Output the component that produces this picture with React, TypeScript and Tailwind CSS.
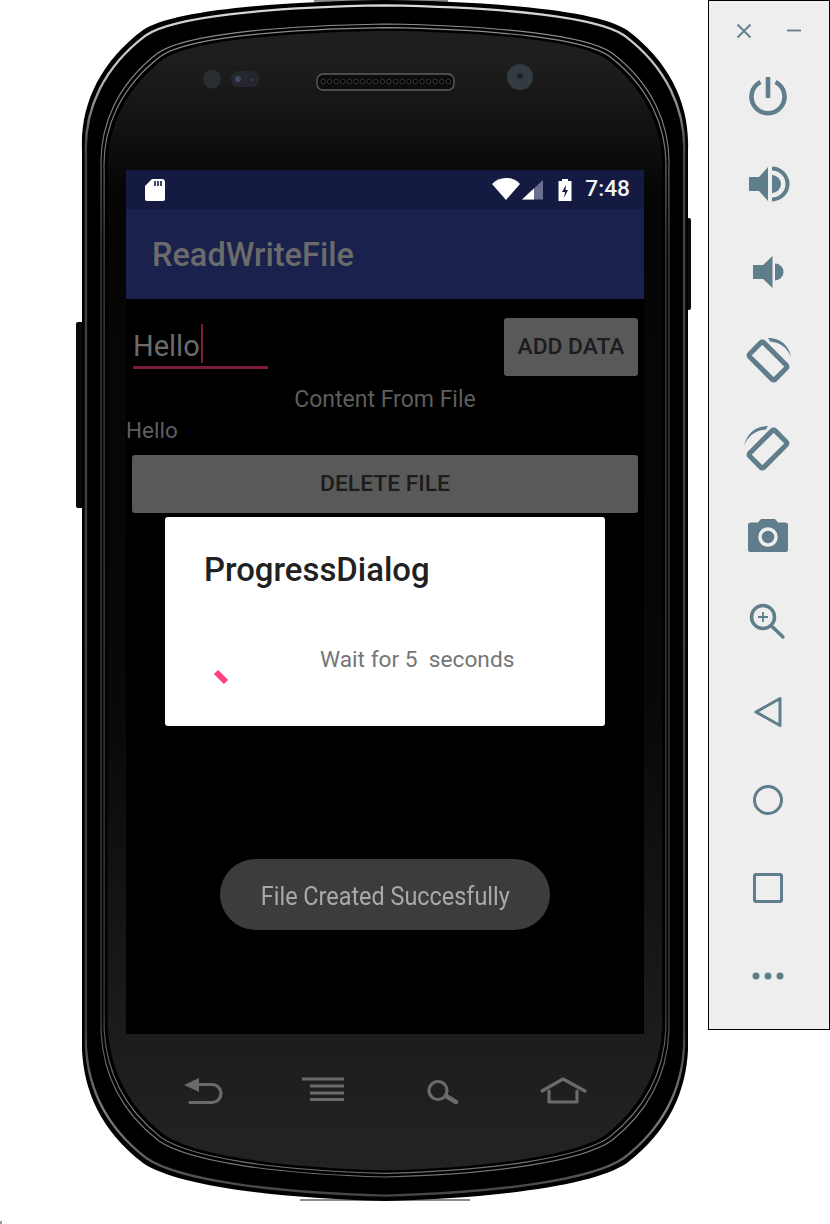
const BODY =
  "M82 150 C80 105 100 62 143 30 C170 12 260 2 385 0 C510 2 600 12 627 30 C670 62 690 105 688 150 L688 1050 C686 1090 670 1130 627 1163 C595 1185 500 1198 385 1201 C270 1198 175 1185 143 1163 C100 1130 84 1090 82 1050 Z";

function Layer(props: { sx: number; sy: number; fill?: string; stroke?: string; w?: number; soft?: boolean }) {
  return (
    <path
      d={BODY}
      transform={`translate(385 600.5) scale(${props.sx} ${props.sy}) translate(-385 -600.5)`}
      fill={props.fill ?? "none"}
      stroke={props.stroke ?? "none"}
      strokeWidth={props.w ?? 0}
      vectorEffect="non-scaling-stroke"
      filter={props.soft ? "url(#soft)" : undefined}
    />
  );
}

function PhoneFrame() {
  const dots = Array.from({ length: 20 }, (_, i) => 323 + i * 6.6);
  return (
    <svg className="absolute left-0 top-0" width={708} height={1224} viewBox="0 0 708 1224">
      <defs>
        <linearGradient id="bezel" gradientUnits="userSpaceOnUse" x1="0" y1="28" x2="0" y2="1170">
          <stop offset="0" stopColor="#1e1e1e" />
          <stop offset="0.05" stopColor="#151515" />
          <stop offset="0.125" stopColor="#050505" />
          <stop offset="0.6" stopColor="#080808" />
          <stop offset="0.875" stopColor="#1a1a1a" />
          <stop offset="1" stopColor="#222222" />
        </linearGradient>
        <linearGradient id="rim" gradientUnits="userSpaceOnUse" x1="0" y1="0" x2="0" y2="1201">
          <stop offset="0" stopColor="#d8d8d8" />
          <stop offset="0.06" stopColor="#bbbbbb" />
          <stop offset="0.12" stopColor="#444444" />
          <stop offset="0.86" stopColor="#3a3a3a" />
          <stop offset="0.93" stopColor="#808080" />
          <stop offset="1" stopColor="#444444" />
        </linearGradient>
        <linearGradient id="thin" gradientUnits="userSpaceOnUse" x1="0" y1="0" x2="0" y2="1201">
          <stop offset="0" stopColor="#8e8e8e" />
          <stop offset="0.1" stopColor="#777777" />
          <stop offset="0.2" stopColor="#444444" />
          <stop offset="0.85" stopColor="#444444" />
          <stop offset="0.95" stopColor="#808080" />
          <stop offset="1" stopColor="#707070" />
        </linearGradient>
        <filter id="soft" x="-5%" y="-5%" width="110%" height="110%">
          <feGaussianBlur stdDeviation="0.6" />
        </filter>
      </defs>
      <rect x="76" y="322" width="8" height="186" rx="2" fill="#0a0a0a" />
      <rect x="685" y="218" width="6" height="92" rx="2" fill="#0a0a0a" />
      <rect x="314" y="0" width="134" height="2" fill="#8a8a8a" />
      <rect x="300" y="1199" width="170" height="2" fill="#8a8a8a" />
      <Layer sx={1} sy={1} fill="#000000" />
      <Layer sx={0.987} sy={0.991} stroke="url(#rim)" w={2.4} soft />
      <Layer sx={0.937} sy={0.96} stroke="url(#thin)" w={1.2} soft />
      <Layer sx={0.927} sy={0.954} stroke="url(#thin)" w={1.2} soft />
      <Layer sx={0.915} sy={0.949} fill="url(#bezel)" />
      <ellipse cx="212" cy="79" rx="9" ry="9.5" fill="#2a2d33" filter="url(#soft)" />
      <rect x="231" y="71" width="28" height="16" rx="7" fill="#25282e" filter="url(#soft)" />
      <circle cx="238" cy="79" r="3" fill="#3d4a63" filter="url(#soft)" />
      <circle cx="252" cy="80" r="1" fill="#444a55" />
      <rect x="317" y="74" width="137" height="16" rx="6" fill="#0c0c0c" stroke="#5f5f5f" strokeWidth="1.3" filter="url(#soft)" />
      {dots.map((x) => (
        <circle key={x} cx={x} cy="81.5" r="2.2" fill="#000000" stroke="#444444" strokeWidth="0.8" />
      ))}
      <circle cx="520" cy="77" r="13" fill="#333a3f" filter="url(#soft)" />
      <circle cx="520" cy="76" r="3" fill="#1f2429" filter="url(#soft)" />
      <g stroke="#6a6a6a" strokeWidth="3.2" fill="none" strokeLinecap="round" strokeLinejoin="round">
        <path d="M198 1084.500 H212 A9 9 0 0 1 212 1102.500 H190" />
        <path d="M302 1079 H344 M310 1086 H344 M310 1093 H344 M310 1099.500 H344" strokeLinecap="butt" />
        <circle cx="438" cy="1090.500" r="9" />
        <path d="M446 1096 L456 1102" strokeWidth="4.500" />
        <path d="M542 1091 L563 1079 L585 1091" />
        <path d="M549 1091 V1102 H577 V1091" />
      </g>
      <path d="M184 1085 L199 1078 V1092 Z" fill="#6a6a6a" />
      <rect x="0" y="1221" width="2" height="3" fill="#9a9a9a" />
    </svg>
  );
}

function StatusBar() {
  return (
    <div className="flex h-[39px] items-center justify-between bg-[#141a42] pl-[19px] pr-[14px]">
      <svg width="20" height="24" viewBox="0 0 20 24">
        <path d="M7 1 H17 Q20 1 20 4 V21 Q20 23 18 23 H2 Q0 23 0 21 V8 Z" fill="#ffffff" />
        <path d="M10 3 V8 M13 3 V8 M16 3 V8" stroke="#141a42" strokeWidth="1.6" />
      </svg>
      <div className="flex items-center">
        <svg width="56" height="24" viewBox="0 0 56 24">
          <path d="M4 6 C11 -2 25 -2 32 6 L18 22 Z" fill="#ffffff" />
          <path d="M34 21.500 L55 21.500 L55 2 Z" fill="#6b6f90" />
          <path d="M34 21.500 L46 21.500 L46 10.500 Z" fill="#ffffff" />
        </svg>
        <svg className="ml-[14px]" width="14" height="24" viewBox="0 0 14 24">
          <path d="M4 1 H10 V3 H13.500 V23 H0.500 V3 H4 Z" fill="#ffffff" />
          <path d="M8 7 L4 14 H7 L6 20 L10 12 H7.500 Z" fill="#141a42" />
        </svg>
        <span className="ml-[13px] font-[Roboto,sans-serif] text-[22.700px] font-medium leading-none text-[#f2f2f2]">
          7:48
        </span>
      </div>
    </div>
  );
}

function ScreenBody() {
  return (
    <div className="flex h-[735px] flex-col bg-black font-[Roboto,sans-serif]">
      <div className="flex items-start justify-between pl-[7px] pr-[6px] pt-[19px]">
        <div className="mt-[6px] flex h-[45px] w-[135px] items-start border-b-[3px] border-[#7d1a3f]">
          <span className="text-[29px] leading-[44px] text-[#6b6b6b]">Hello</span>
          <span className="ml-[1px] h-[39px] w-[2.500px] bg-[#7d1a3f]" />
        </div>
        <div className="flex h-[58px] w-[134px] items-center justify-center rounded-[3px] bg-[#595959] text-[22.800px] font-medium text-[#1c1c1c]">
          ADD DATA
        </div>
      </div>
      <div className="mt-[10px] h-[28px] text-center text-[23px] leading-[28px] text-[#5e5e5e]">
        Content From File
      </div>
      <div className="mt-[1px] h-[30px] text-[22.500px] leading-[30px] text-[#5e5e5e]">Hello</div>
      <div className="ml-[6px] mr-[6px] mt-[10px] flex h-[58px] items-center justify-center rounded-[3px] bg-[#595959] pt-[1px] text-[22.800px] font-medium text-[#1c1c1c]">
        DELETE FILE
      </div>
    </div>
  );
}

function Dialog() {
  return (
    <div className="absolute left-[39px] top-[347px] h-[209px] w-[440px] rounded-[3px] bg-white font-[Roboto,sans-serif]">
      <div className="pl-[39px] pt-[32px] text-[32.900px] font-medium leading-[42px] text-[#212121]">ProgressDialog</div>
      <div className="flex items-start pl-[48px] pt-[55px]">
        <svg width="16" height="18" viewBox="0 0 16 18" className="mt-[23px]">
          <path d="M3 3 L13 13" stroke="#ff4081" strokeWidth="6" />
        </svg>
        <span className="ml-[91px] whitespace-pre text-[22.700px] leading-[28px] text-[#757575]">Wait for 5  seconds</span>
      </div>
    </div>
  );
}

function Toast() {
  return (
    <div className="absolute left-[94px] top-[689px] flex h-[71px] w-[330px] items-center justify-center rounded-full bg-[#3c3c3c] pt-[4px] font-[Roboto,sans-serif]">
      <span className="inline-block origin-center scale-x-[0.9] whitespace-nowrap text-[26px] text-[#a9a9a9]">
        File Created Succesfully
      </span>
    </div>
  );
}

function Icon({ children }: { children: React.ReactNode }) {
  return (
    <div className="flex h-[88px] w-full items-center justify-center pr-[2px]">
      <svg width="60" height="60" viewBox="-30 -30 60 60">
        {children}
      </svg>
    </div>
  );
}

const SLATE = "#607d8b";

function Sidebar() {
  return (
    <div className="flex h-[1030px] w-[122px] flex-col border border-black bg-[#eeeeee]">
      <div className="flex h-[51px] items-start pl-[27px] pt-[22px]">
        <svg width="16" height="16" viewBox="0 0 16 16">
          <path d="M1.500 1.500 L14.500 14.500 M14.500 1.500 L1.500 14.500" stroke={SLATE} strokeWidth="1.8" />
        </svg>
        <svg className="ml-[34px]" width="16" height="16" viewBox="0 0 16 16">
          <path d="M1 7.500 H15" stroke={SLATE} strokeWidth="1.8" />
        </svg>
      </div>
      <Icon>
        <path d="M-7.500 -14 A16.500 16.500 0 1 0 7.500 -14" fill="none" stroke={SLATE} strokeWidth="4.500" />
        <rect x="-2.300" y="-19" width="4.600" height="21" rx="1" fill={SLATE} />
      </Icon>
      <Icon>
        <path d="M-19 -7 H-9 L0 -17 V17 L-9 7 H-19 Z" fill={SLATE} />
        <path d="M4 -9 A9 9 0 0 1 4 9 Z" fill={SLATE} />
        <path d="M4 -15.500 A15.500 15.500 0 0 1 4 15.500" fill="none" stroke={SLATE} strokeWidth="4" />
      </Icon>
      <Icon>
        <path d="M-15 -7 H-5 L4.500 -16 V16 L-5 7 H-15 Z" fill={SLATE} />
        <path d="M7 -8.500 A8.500 8.500 0 0 1 7 8.500 Z" fill={SLATE} />
      </Icon>
      <Icon>
        <rect x="-18" y="-10" width="36" height="20" rx="2" transform="translate(0 1) rotate(45)" fill="none" stroke={SLATE} strokeWidth="5" strokeLinejoin="round" />
        <path d="M0 -22 C12 -22 21 -15 23 -3 C19 -13 11 -18 2 -18.500 Z" fill={SLATE} />
      </Icon>
      <Icon>
        <rect x="-18" y="-10" width="36" height="20" rx="2" transform="translate(0 1) rotate(-45)" fill="none" stroke={SLATE} strokeWidth="5" strokeLinejoin="round" />
        <path d="M0 -22 C-12 -22 -21 -15 -24 -2 C-20 -13 -11 -18 -2 -18.500 Z" fill={SLATE} />
      </Icon>
      <Icon>
        <path d="M-20 -11 Q-20 -13.500 -17 -13.500 H-10 L-7 -17 H7 L10 -13.500 H17 Q20 -13.500 20 -11 V14 Q20 16 17 16 H-17 Q-20 16 -20 14 Z" fill={SLATE} />
        <circle cx="0" cy="1" r="8" fill={SLATE} stroke="#eeeeee" strokeWidth="3.500" />
      </Icon>
      <Icon>
        <circle cx="-5" cy="-7" r="11.500" fill="none" stroke={SLATE} strokeWidth="3.500" />
        <path d="M3.500 2 L15 13" stroke={SLATE} strokeWidth="3.500" strokeLinecap="round" />
        <path d="M-10 -7 H0 M-5 -12 V-2" stroke={SLATE} strokeWidth="1.800" />
      </Icon>
      <Icon>
        <path d="M-12 0 L12 -13.500 V13.500 Z" fill="none" stroke={SLATE} strokeWidth="3" strokeLinejoin="round" />
      </Icon>
      <Icon>
        <circle cx="0" cy="0" r="13.500" fill="none" stroke={SLATE} strokeWidth="3" />
      </Icon>
      <Icon>
        <rect x="-13.500" y="-13.500" width="27" height="27" rx="1.500" fill="none" stroke={SLATE} strokeWidth="3" />
      </Icon>
      <Icon>
        <circle cx="-12" cy="0" r="3.500" fill={SLATE} />
        <circle cx="0" cy="0" r="3.500" fill={SLATE} />
        <circle cx="12" cy="0" r="3.500" fill={SLATE} />
      </Icon>
    </div>
  );
}

export default function App() {
  return (
    <div className="flex h-[1224px] w-[830px] overflow-hidden bg-white">
      <div className="relative h-[1224px] w-[708px] pl-[126px] pt-[170px]">
        <PhoneFrame />
        <div className="relative w-[518px]">
          <StatusBar />
          <div className="flex h-[90px] items-center bg-[#1a214c] pl-[26px] pt-[2px] font-[Roboto,sans-serif] text-[32.500px] font-medium text-[#6b6b6b]">
            ReadWriteFile
          </div>
          <ScreenBody />
          <Dialog />
          <Toast />
        </div>
      </div>
      <Sidebar />
    </div>
  );
}
